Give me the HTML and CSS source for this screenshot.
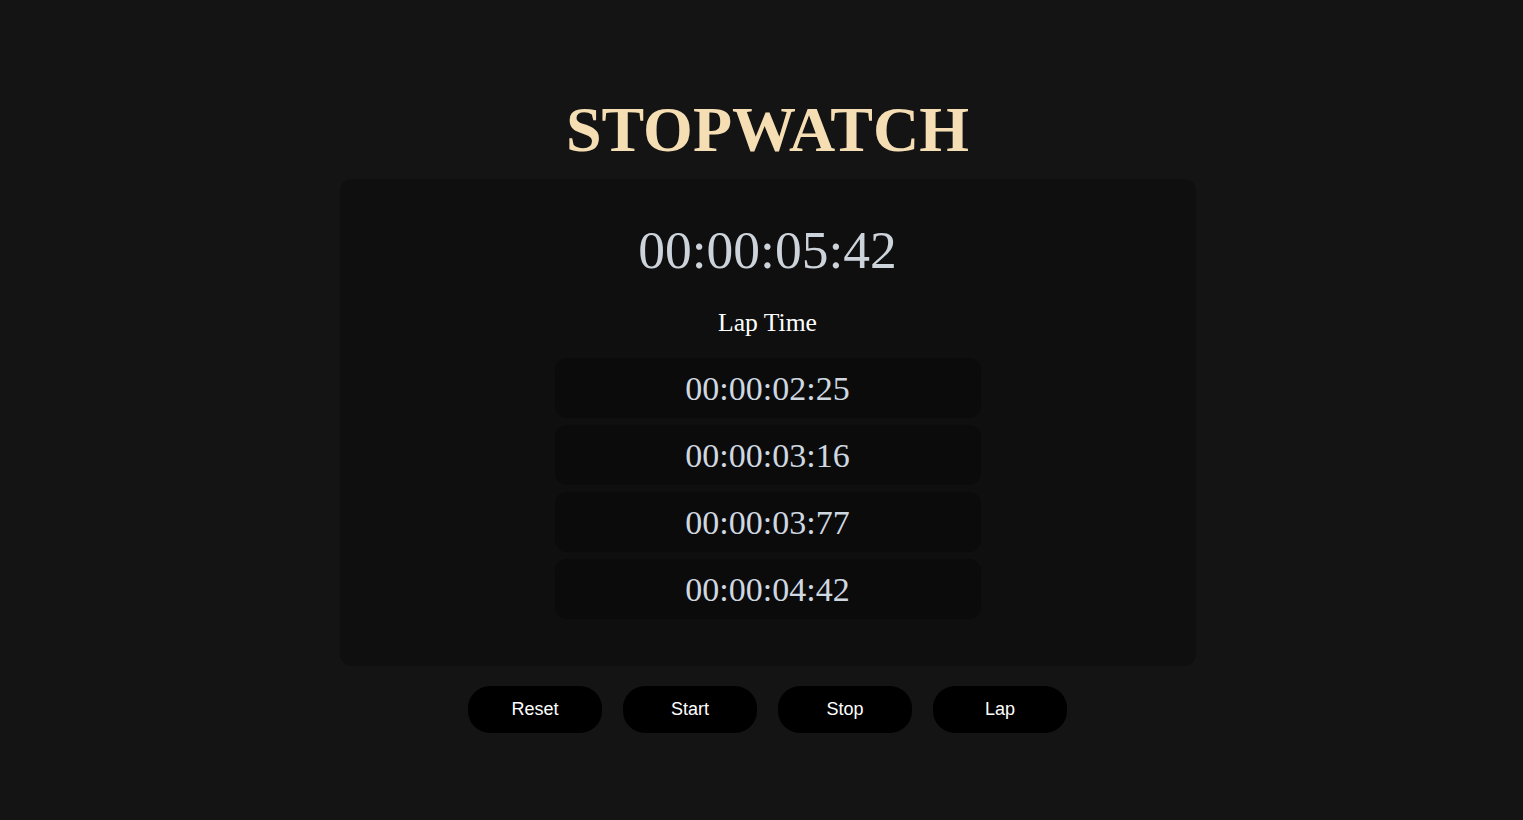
FILE: index.html
```html
<!DOCTYPE html>
<html lang="en">
<head>
<meta charset="utf-8">
<title>Stopwatch</title>
<link rel="stylesheet" href="styles.css">
</head>
<body>
<main class="app">
  <h1 class="title">STOPWATCH</h1>
  <section class="card">
    <div class="time">00:00:05:42</div>
    <div class="lap-label">Lap Time</div>
    <ul class="laps">
      <li class="lap">00:00:02:25</li>
      <li class="lap">00:00:03:16</li>
      <li class="lap">00:00:03:77</li>
      <li class="lap">00:00:04:42</li>
    </ul>
  </section>
  <div class="controls">
    <button class="btn">Reset</button>
    <button class="btn">Start</button>
    <button class="btn">Stop</button>
    <button class="btn">Lap</button>
  </div>
</main>
</body>
</html>
```

FILE: styles.css
```css
html, body {
  margin: 0;
  height: 100%;
}
body {
  background: #141414;
  font-family: "Liberation Serif", "Times New Roman", serif;
  padding-left: 12px;
  box-sizing: border-box;
}
.app {
  display: flex;
  flex-direction: column;
  align-items: center;
  padding-top: 98px;
}
.title {
  margin: 0;
  font-size: 64px;
  font-weight: bold;
  color: #f5deb3;
  line-height: 1;
}
.card {
  margin-top: 17px;
  width: 856px;
  height: 487px;
  box-sizing: border-box;
  background: #0f0f0f;
  border-radius: 12px;
  display: flex;
  flex-direction: column;
  align-items: center;
  padding-top: 45px;
}
.time {
  font-size: 53.5px;
  color: #ccd3da;
  line-height: 1;
}
.lap-label {
  margin-top: 32px;
  font-size: 25.6px;
  color: #ffffff;
  line-height: 1;
}
.laps {
  list-style: none;
  margin: 23px 0 0;
  padding: 0;
  display: flex;
  flex-direction: column;
  gap: 7px;
}
.lap {
  width: 426px;
  height: 60px;
  background: #0b0b0b;
  border-radius: 12px;
  display: flex;
  align-items: center;
  justify-content: center;
  font-size: 34px;
  color: #cfd8e0;
  padding-top: 2px;
  box-sizing: border-box;
}
.controls {
  margin-top: 20px;
  display: flex;
  gap: 21px;
}
.btn {
  width: 134px;
  height: 47px;
  background: #000;
  color: #fff;
  border: none;
  border-radius: 22px;
  font-family: "Liberation Sans", Arial, sans-serif;
  font-size: 18px;
}
```
